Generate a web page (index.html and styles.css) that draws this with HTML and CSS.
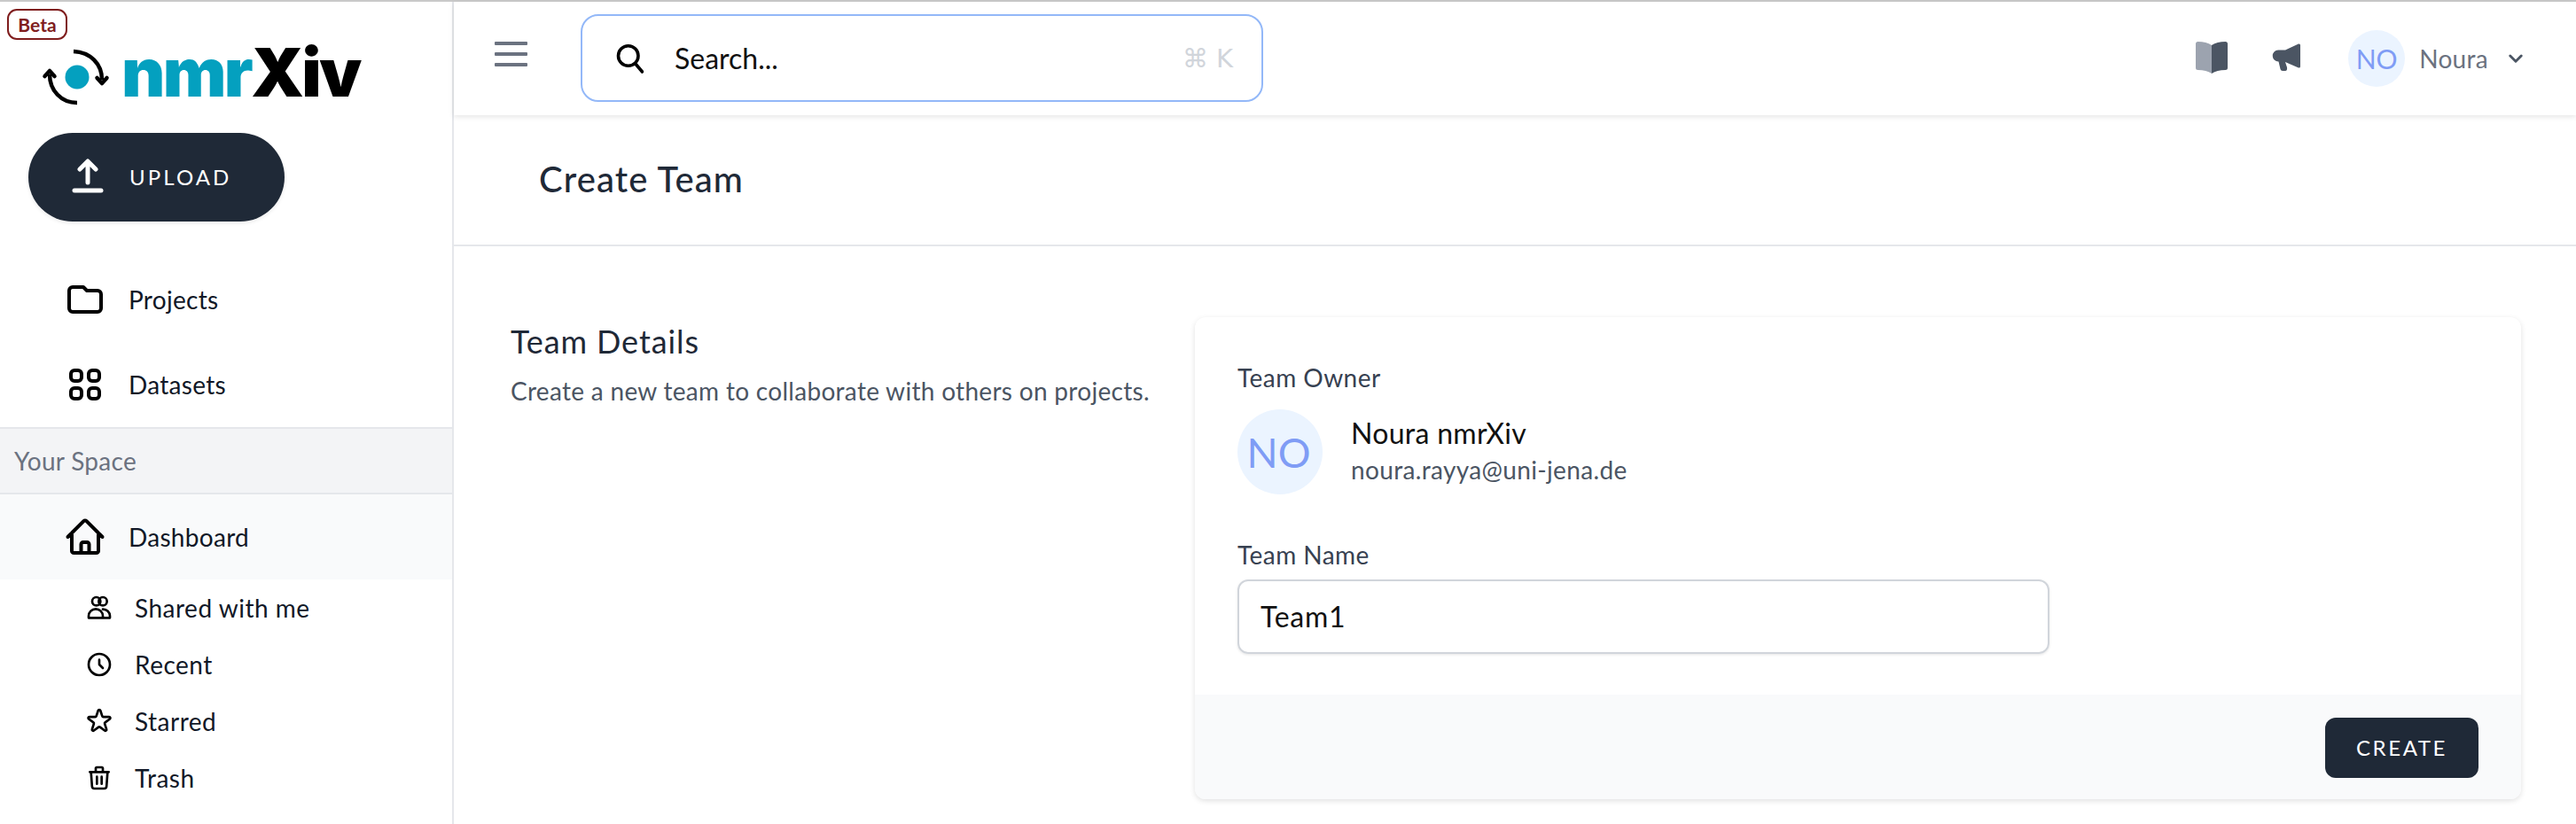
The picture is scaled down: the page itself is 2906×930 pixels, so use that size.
FILE: index.html
```html
<!DOCTYPE html>
<html lang="en">
<head>
<meta charset="utf-8">
<title>Create Team</title>
<link rel="stylesheet" href="styles.css">
</head>
<body>
<div class="app">
  <aside class="sidebar">
    <span class="beta">Beta</span>
    <div class="logo">
      <svg class="logo-mark" viewBox="0 0 80 70" fill="none" stroke="#000" stroke-width="4.500">
        <path d="M38 6C57 7 70 20 70 38"/>
        <path d="M64.500 36l5.500 6 5.500-6" stroke-linejoin="round" stroke-linecap="round"/>
        <path d="M42 64C24 64 11 50 11 32"/>
        <path d="M5.500 34l5.500-6 5.500 6" stroke-linejoin="round" stroke-linecap="round"/>
        <circle cx="42" cy="35" r="13.500" fill="#04a0bf" stroke="none"/>
      </svg>
      <div class="logo-text"><span class="logo-nmr">nmr</span><span class="logo-xiv">Xiv</span></div>
    </div>
    <button class="upload">
      <svg class="upload-icon" viewBox="0 0 36 40" fill="none" stroke="#fff" stroke-width="5" stroke-linecap="round" stroke-linejoin="round">
        <path d="M18 4v23M9 12l9-9 9 9"/>
        <path d="M3 36h30"/>
      </svg>
      <span>UPLOAD</span>
    </button>
    <nav class="nav">
      <a class="nav-item">
        <svg class="nav-icon" viewBox="0 0 24 24" fill="none" stroke="#000" stroke-width="2" stroke-linecap="round" stroke-linejoin="round"><path d="M3 7v10a2 2 0 002 2h14a2 2 0 002-2V9a2 2 0 00-2-2h-6l-2-2H5a2 2 0 00-2 2z"/></svg>
        <span>Projects</span>
      </a>
      <a class="nav-item">
        <svg class="nav-icon" viewBox="0 0 24 24" fill="none" stroke="#000" stroke-width="2" stroke-linecap="round" stroke-linejoin="round"><path d="M4 6a2 2 0 012-2h2a2 2 0 012 2v2a2 2 0 01-2 2H6a2 2 0 01-2-2V6zM14 6a2 2 0 012-2h2a2 2 0 012 2v2a2 2 0 01-2 2h-2a2 2 0 01-2-2V6zM4 16a2 2 0 012-2h2a2 2 0 012 2v2a2 2 0 01-2 2H6a2 2 0 01-2-2v-2zM14 16a2 2 0 012-2h2a2 2 0 012 2v2a2 2 0 01-2 2h-2a2 2 0 01-2-2v-2z"/></svg>
        <span>Datasets</span>
      </a>
      <div class="nav-heading">Your Space</div>
      <a class="nav-item nav-item-active">
        <svg class="nav-icon" viewBox="0 0 24 24" fill="none" stroke="#000" stroke-width="2" stroke-linecap="round" stroke-linejoin="round"><path d="M2.25 12l8.954-8.955c.44-.439 1.152-.439 1.591 0L21.75 12M4.5 9.75v10.125c0 .621.504 1.125 1.125 1.125H9.75v-4.875c0-.621.504-1.125 1.125-1.125h2.25c.621 0 1.125.504 1.125 1.125V21h4.125c.621 0 1.125-.504 1.125-1.125V9.75M8.25 21h8.25"/></svg>
        <span>Dashboard</span>
      </a>
      <div class="subnav">
        <a class="sub-item">
          <svg class="sub-icon" viewBox="0 0 24 24" fill="none" stroke="#000" stroke-width="2" stroke-linecap="round" stroke-linejoin="round"><circle cx="9.5" cy="6.5" r="3.5"/><circle cx="15" cy="6.5" r="3.5"/><path d="M3 20.5v-1.5a6 6 0 016-6 6 6 0 016 6v1.5zM15 13.2a5.8 5.8 0 016 5.8v1.5h-6"/></svg>
          <span>Shared with me</span>
        </a>
        <a class="sub-item">
          <svg class="sub-icon" viewBox="0 0 24 24" fill="none" stroke="#000" stroke-width="2" stroke-linecap="round" stroke-linejoin="round"><circle cx="12" cy="12" r="9"/><path d="M12 8v4l3 3"/></svg>
          <span>Recent</span>
        </a>
        <a class="sub-item">
          <svg class="sub-icon" viewBox="0 0 24 24" fill="none" stroke="#000" stroke-width="2" stroke-linecap="round" stroke-linejoin="round"><path d="M11.049 2.927c.3-.921 1.603-.921 1.902 0l1.519 4.674a1 1 0 00.95.69h4.915c.969 0 1.371 1.24.588 1.81l-3.976 2.888a1 1 0 00-.363 1.118l1.518 4.674c.3.922-.755 1.688-1.538 1.118l-3.976-2.888a1 1 0 00-1.176 0l-3.976 2.888c-.783.57-1.838-.197-1.538-1.118l1.518-4.674a1 1 0 00-.363-1.118l-3.976-2.888c-.784-.57-.38-1.81.588-1.81h4.914a1 1 0 00.951-.69l1.519-4.674z"/></svg>
          <span>Starred</span>
        </a>
        <a class="sub-item">
          <svg class="sub-icon" viewBox="0 0 24 24" fill="none" stroke="#000" stroke-width="2" stroke-linecap="round" stroke-linejoin="round"><path d="M19 7l-.867 12.142A2 2 0 0116.138 21H7.862a2 2 0 01-1.995-1.858L5 7m5 4v6m4-6v6m1-10V4a1 1 0 00-1-1h-4a1 1 0 00-1 1v3M4 7h16"/></svg>
          <span>Trash</span>
        </a>
      </div>
    </nav>
  </aside>

  <div class="main">
    <header class="topbar">
      <div class="menu-btn"><i></i><i></i><i></i></div>
      <div class="search">
        <svg class="search-icon" viewBox="0 0 24 24" fill="none" stroke="#000" stroke-width="2.4" stroke-linecap="round" stroke-linejoin="round"><path d="M21 22l-5.5-6.5M18 10a7.5 7.5 0 11-15 0 7.5 7.5 0 0115 0z"/></svg>
        <span class="search-text">Search...</span>
        <span class="search-key">⌘ K</span>
      </div>
      <div class="top-actions">
        <svg class="book" viewBox="0 0 36 36"><path fill="#9ca3af" d="M0 2.5Q0 0 2.5 0Q12 0 18 4V36Q12 32 2.5 32Q0 32 0 29.5Z"/><path fill="#4b5563" d="M36 2.5Q36 0 33.5 0Q24 0 18 4V36Q24 32 33.500 32Q36 32 36 29.500Z"/></svg>
        <svg class="megaphone" viewBox="0 0 32 32"><path fill="#4b5563" d="M7 7.500H15L30 .5Q32 0 32 2V26Q32 28 30 27.500L15 21L17 27Q17.500 31 15 31H12Q10 31 9.500 29L7.500 20.500A6.500 6.500 0 0 1 7 7.500Z"/></svg>
        <div class="user">
          <span class="avatar-small">NO</span>
          <span class="user-name">Noura</span>
          <svg class="chevron" viewBox="0 0 18 12" fill="none" stroke="#4b5563" stroke-width="3.200" stroke-linecap="round" stroke-linejoin="round"><path d="M2 2l7 7 7-7"/></svg>
        </div>
      </div>
    </header>
    <div class="page-title"><h1>Create Team</h1></div>
    <section class="content">
      <div class="intro">
        <h2>Team Details</h2>
        <p>Create a new team to collaborate with others on projects.</p>
      </div>
      <div class="card">
        <div class="card-body">
          <div class="label">Team Owner</div>
          <div class="owner">
            <span class="avatar-large">NO</span>
            <div class="owner-info">
              <div class="owner-name">Noura nmrXiv</div>
              <div class="owner-email">noura.rayya@uni-jena.de</div>
            </div>
          </div>
          <div class="label label-name">Team Name</div>
          <div class="input">Team1</div>
        </div>
        <div class="card-footer">
          <button class="create">CREATE</button>
        </div>
      </div>
    </section>
  </div>
</div>
</body>
</html>
```

FILE: styles.css
```css
* { box-sizing: border-box; }
html, body { margin: 0; padding: 0; height: 100%; background: #fff; }
body { font-family: "Lato", "Noto Sans", sans-serif; overflow: hidden; color: #111827; }

.app { display: flex; height: 930px; border-top: 2px solid #c9c9c9; }

/* Sidebar */
.sidebar { position: relative; width: 512px; flex: none; border-right: 2px solid #e5e7eb; }
.beta { position: absolute; left: 8px; top: 8px; width: 68px; height: 35px; border: 2px solid #7f1d1d; border-radius: 11px; color: #7f1d1d; font-size: 21px; font-weight: 700; line-height: 31px; text-align: center; }
.logo { display: flex; align-items: flex-start; height: 148px; padding-left: 45px; }
.logo-mark { width: 80px; height: 70px; margin-top: 50px; flex: none; }
.logo-text { margin: 33px 0 0 12px; font-family: "Inter", sans-serif; font-size: 76px; font-weight: 900; line-height: 92px; letter-spacing: -2.600px; white-space: nowrap; }
.logo-nmr { color: #04a0bf; }
.logo-xiv { color: #000; }

.upload { display: flex; align-items: center; gap: 29px; width: 289px; height: 100px; margin-left: 32px; padding: 0 0 2px 49px; border: 0; border-radius: 50px; background: #1f2937; color: #fff; font-family: inherit; font-size: 24px; letter-spacing: 3.100px; box-shadow: 0 2px 4px rgba(0,0,0,.08); }
.upload-icon { width: 36px; height: 40px; flex: none; }

.nav { margin-top: 40px; }
.nav-item { display: flex; align-items: center; gap: 25px; height: 96px; padding-left: 72px; font-size: 28px; letter-spacing: .3px; }
.nav-icon { width: 48px; height: 48px; flex: none; }
.nav-item-active { background: #f9fafb; }
.nav-heading { display: flex; align-items: center; height: 76px; padding-left: 16px; background: #f3f4f6; border-top: 2px solid #e5e7eb; border-bottom: 2px solid #e5e7eb; color: #6b7280; font-size: 28px; letter-spacing: .3px; }
.sub-item { display: flex; align-items: center; gap: 24px; height: 64px; padding-left: 96px; font-size: 28px; letter-spacing: .5px; }
.sub-icon { width: 32px; height: 32px; flex: none; }

/* Main */
.main { flex: 1; min-width: 0; }
.topbar { position: relative; display: flex; align-items: center; height: 128px; padding-left: 46px; box-shadow: 0 2px 6px rgba(0,0,0,.1); }
.menu-btn { display: flex; flex-direction: column; justify-content: space-between; width: 37px; height: 28px; margin-top: -10px; flex: none; }
.menu-btn i { display: block; height: 4px; border-radius: 1px; background: #6b7280; }
.search { display: flex; align-items: center; width: 770px; height: 99px; margin: -1px 0 0 60px; padding: 0 32px 0 36px; border: 2px solid #93b8f8; border-radius: 20px; flex: none; }
.search-icon { width: 36px; height: 36px; flex: none; }
.search-text { margin-left: 32px; color: #111; font-size: 32px; }
.search-key { margin-left: auto; color: #d1d5db; font-family: "DejaVu Sans", sans-serif; font-size: 29px; }
.top-actions { display: flex; align-items: center; margin-left: auto; padding-right: 60px; }
.book { width: 36px; height: 36px; margin-top: -2px; flex: none; }
.megaphone { width: 32px; height: 32px; margin: -2px 0 0 50px; flex: none; }
.user { display: flex; align-items: center; margin-left: 54px; }
.avatar-small { display: flex; align-items: center; justify-content: center; width: 64px; height: 64px; border-radius: 50%; background: #ebf4ff; color: #7f9cf5; font-size: 30px; }
.user-name { margin-left: 16px; color: #6b7280; font-size: 28px; letter-spacing: .3px; }
.chevron { width: 16px; height: 11px; margin-left: 23px; }

.page-title { display: flex; align-items: center; height: 148px; padding: 0 0 2px 96px; border-bottom: 2px solid #e5e7eb; }
.page-title h1 { margin: 0; color: #1f2937; font-size: 40px; font-weight: 500; letter-spacing: 1.100px; }

.content { display: flex; padding: 80px 62px 0 64px; }
.intro { width: 772px; flex: none; }
.intro h2 { margin: -1px 0 0; color: #1f2937; font-size: 36px; font-weight: 400; line-height: 56px; letter-spacing: .9px; }
.intro p { margin: 8px 0 0; color: #4b5563; font-size: 28px; line-height: 40px; letter-spacing: .3px; }

.card { flex: 1; height: 544px; border-radius: 12px; background: #fff; box-shadow: 0 2px 6px rgba(0,0,0,.12); overflow: hidden; }
.card-body { height: 426px; padding: 48px 48px 0; }
.label { color: #374151; font-size: 28px; line-height: 40px; letter-spacing: .45px; }
.owner { display: flex; align-items: center; gap: 32px; margin-top: 16px; }
.avatar-large { display: flex; align-items: center; justify-content: center; width: 96px; height: 96px; padding-right: 3px; border-radius: 50%; background: #ebf4ff; color: #7f9cf5; font-size: 46px; flex: none; }
.owner-info { margin-top: -2px; }
.owner-name { color: #111; font-size: 32px; line-height: 42px; letter-spacing: .3px; }
.owner-email { color: #4b5563; font-size: 28px; line-height: 40px; letter-spacing: .35px; }
.label-name { margin-top: 48px; }
.input { display: flex; align-items: center; width: 916px; height: 84px; margin-top: 8px; padding: 0 0 1px 24px; border: 2px solid #d1d5db; border-radius: 12px; box-shadow: 0 1px 3px rgba(0,0,0,.1); color: #111; font-size: 32px; letter-spacing: .7px; }
.card-footer { display: flex; justify-content: flex-end; height: 118px; padding: 26px 48px 0 0; background: #f9fafb; }
.create { width: 173px; height: 68px; padding-bottom: 3px; border: 0; border-radius: 12px; background: #1f2937; color: #fff; font-family: inherit; font-size: 24px; letter-spacing: 2.600px; }
```
